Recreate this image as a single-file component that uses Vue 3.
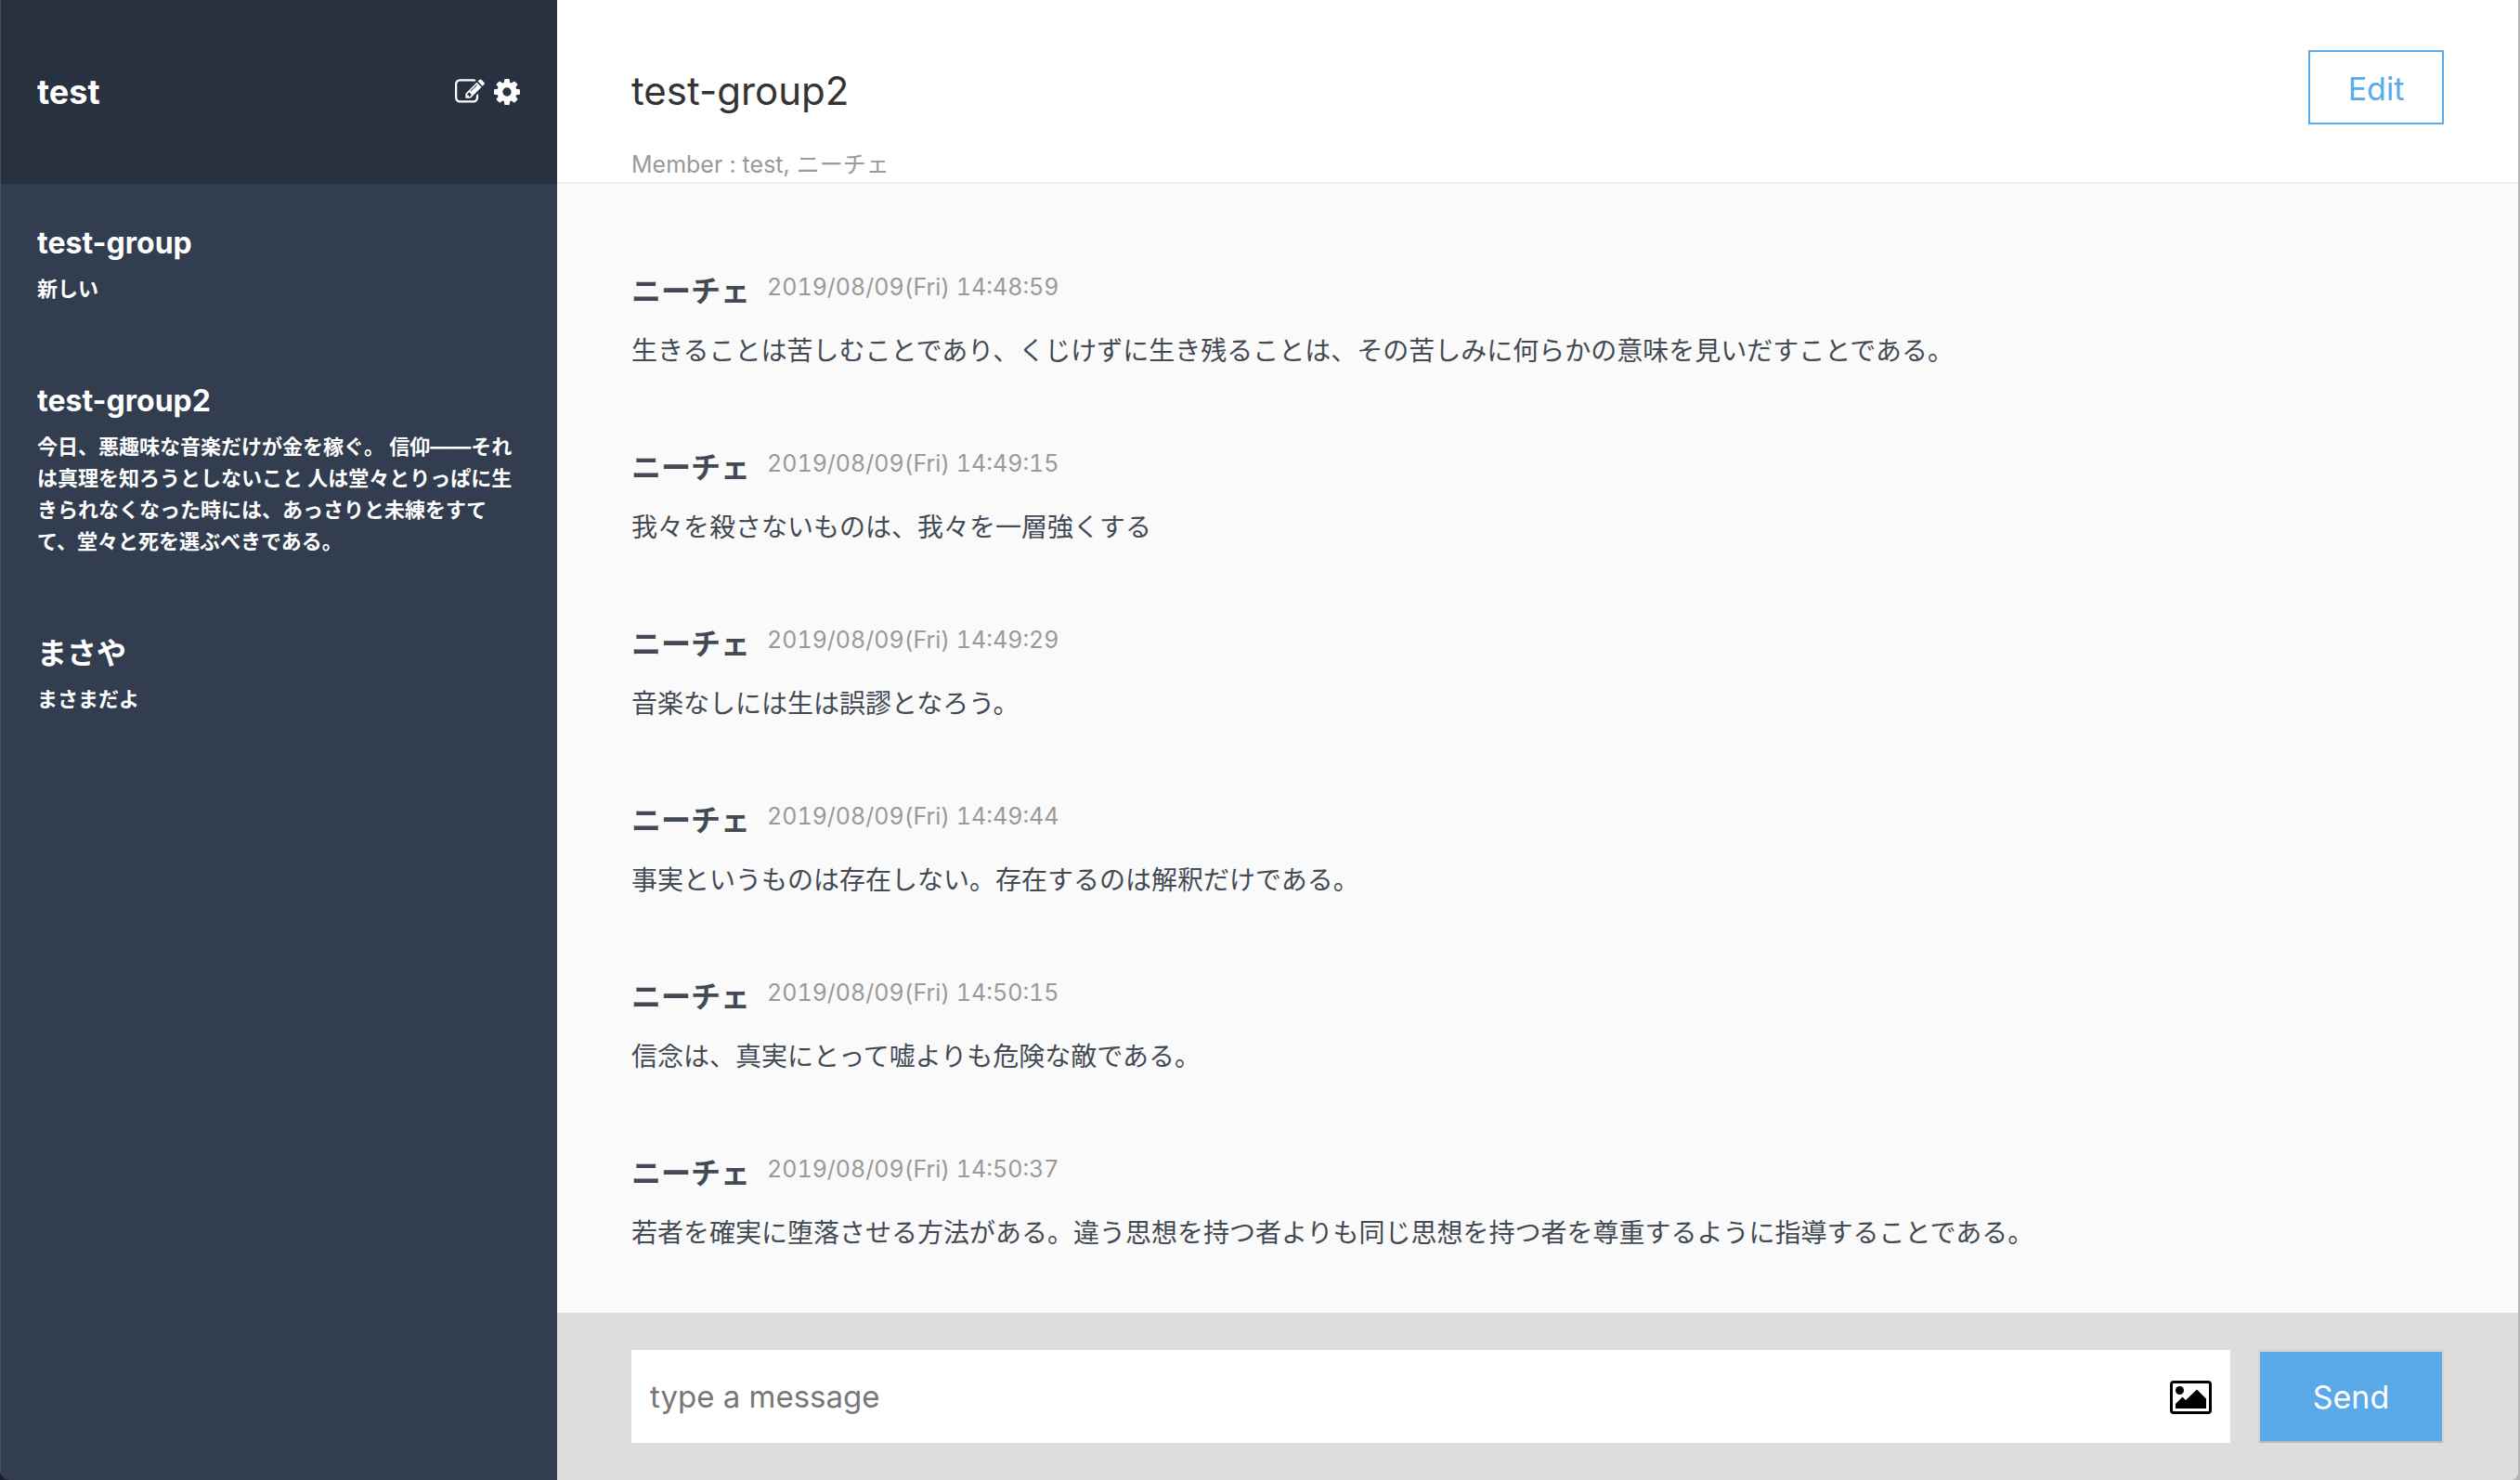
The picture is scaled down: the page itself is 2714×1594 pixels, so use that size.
<script setup>
import { ref } from 'vue'

const draft = ref('')

const groups = [
  { name: 'test-group', preview: '新しい' },
  {
    name: 'test-group2',
    preview:
      '今日、悪趣味な音楽だけが金を稼ぐ。 信仰――それは真理を知ろうとしないこと 人は堂々とりっぱに生きられなくなった時には、あっさりと未練をすてて、堂々と死を選ぶべきである。',
  },
  { name: 'まさや', preview: 'まさまだよ' },
]

const messages = [
  { user: 'ニーチェ', date: '2019/08/09(Fri) 14:48:59', text: '生きることは苦しむことであり、くじけずに生き残ることは、その苦しみに何らかの意味を見いだすことである。' },
  { user: 'ニーチェ', date: '2019/08/09(Fri) 14:49:15', text: '我々を殺さないものは、我々を一層強くする' },
  { user: 'ニーチェ', date: '2019/08/09(Fri) 14:49:29', text: '音楽なしには生は誤謬となろう。' },
  { user: 'ニーチェ', date: '2019/08/09(Fri) 14:49:44', text: '事実というものは存在しない。存在するのは解釈だけである。' },
  { user: 'ニーチェ', date: '2019/08/09(Fri) 14:50:15', text: '信念は、真実にとって嘘よりも危険な敵である。' },
  { user: 'ニーチェ', date: '2019/08/09(Fri) 14:50:37', text: '若者を確実に堕落させる方法がある。違う思想を持つ者よりも同じ思想を持つ者を尊重するように指導することである。' },
]
</script>

<template>
  <div class="chat">
    <aside class="sidebar">
      <header class="account">
        <h2 class="account-name">test</h2>
        <nav class="account-links">
          <a href="#new" aria-label="New group">
            <svg class="icon-edit" viewBox="0 0 1792 1792" fill="currentColor">
              <path d="M888 1184l116-116-152-152-116 116v56h96v96h56zm440-720q-16-16-33 1l-350 350q-17 17-1 33t33-1l350-350q17-17 1-33zm80 594v190q0 119-84.500 203.500t-203.500 84.500h-832q-119 0-203.500-84.500t-84.500-203.500v-832q0-119 84.500-203.500t203.500-84.500h832q63 0 117 25 15 7 18 23 3 17-9 29l-49 49q-14 14-32 8-23-6-45-6h-832q-66 0-113 47t-47 113v832q0 66 47 113t113 47h832q66 0 113-47t47-113v-126q0-13 9-22l64-64q15-15 35-7t20 29zm-96-738l288 288-672 672h-288v-288zm444 132l-92 92-288-288 92-92q28-28 68-28t68 28l152 152q28 28 28 68t-28 68z" />
            </svg>
          </a>
          <a href="#settings" aria-label="Settings">
            <svg class="icon-cog" viewBox="0 0 1536 1536" fill="currentColor">
              <path d="M1024 768q0-106-75-181t-181-75-181 75-75 181 75 181 181 75 181-75 75-181zm512-109v222q0 12-8 23t-20 13l-185 28q-19 54-39 91 35 50 107 138 10 12 10 25t-9 23q-27 37-99 108t-94 71q-12 0-26-9l-138-108q-44 23-91 38-16 136-29 186-7 28-36 28h-222q-14 0-24.500-8.500t-11.500-21.500l-28-184q-49-16-90-37l-141 107q-10 9-25 9-14 0-25-11-126-114-165-168-7-10-7-23 0-12 8-23 15-21 51-66.500t54-70.500q-27-50-41-99l-183-27q-13-2-21-12.500t-8-23.500v-222q0-12 8-23t19-13l186-28q14-46 39-92-40-57-107-138-10-12-10-24 0-10 9-23 26-36 98.500-107.500t94.500-71.500q13 0 26 10l138 107q44-23 91-38 16-136 29-186 7-28 36-28h222q14 0 24.500 8.500t11.500 21.500l28 184q49 16 90 37l142-107q9-9 24-9 13 0 25 10 129 119 165 170 7 8 7 22 0 12-8 23-15 21-51 66.500t-54 70.500q26 50 41 98l183 28q13 2 21 12.500t8 23.500z" />
            </svg>
          </a>
        </nav>
      </header>
      <ul class="groups">
        <li v-for="g in groups" :key="g.name" class="group">
          <h3 class="group-name">{{ g.name }}</h3>
          <p class="group-preview">{{ g.preview }}</p>
        </li>
      </ul>
    </aside>

    <main class="room">
      <header class="room-header">
        <div>
          <h1 class="room-name">test-group2</h1>
          <p class="room-members">Member : test, ニーチェ</p>
        </div>
        <button type="button" class="edit">Edit</button>
      </header>

      <section class="messages">
        <article v-for="m in messages" :key="m.date" class="message">
          <div class="message-head">
            <strong class="message-user">{{ m.user }}</strong>
            <time class="message-date">{{ m.date }}</time>
          </div>
          <p class="message-text">{{ m.text }}</p>
        </article>
      </section>

      <form class="composer" @submit.prevent>
        <div class="field">
          <input v-model="draft" class="field-text" type="text" placeholder="type a message" aria-label="Message" />
          <button type="button" class="attach" aria-label="Attach image">
            <svg class="icon-image" viewBox="0 0 45 36">
              <rect x="1.500" y="1.500" width="42" height="33" rx="2.500" fill="none" stroke="currentColor" stroke-width="3" />
              <circle cx="10.500" cy="10.500" r="4.500" fill="currentColor" />
              <path d="M6 30v-5l7.500-7.500 3.500 3.500 12-11.500 10 10V30z" fill="currentColor" />
            </svg>
          </button>
        </div>
        <button type="submit" class="send">Send</button>
      </form>
    </main>
  </div>
</template>

<style>
body {
  margin: 0;
  background: linear-gradient(to right, #18202c 50%, #b4b4b4 50%);
}
</style>

<style scoped>
.chat {
  display: flex;
  box-sizing: border-box;
  min-height: 100vh;
  overflow: hidden;
  border-right: 2px solid #b4b4b4;
  border-radius: 0 0 10px 10px;
  font-family: Inter, "Noto Sans CJK JP", sans-serif;
  color: #434a54;
}

h1, h2, h3, p, ul {
  margin: 0;
  padding: 0;
}

.sidebar {
  flex: 0 0 600px;
  box-sizing: border-box;
  border-left: 1px solid #434e60;
  background: #323d4f;
  color: #fff;
}

.account {
  display: flex;
  align-items: center;
  justify-content: space-between;
  box-sizing: border-box;
  height: 198px;
  padding: 0 40px 0 39px;
  background: #283140;
}

.account-name {
  font-size: 36px;
  line-height: 48px;
}

.account-links {
  display: flex;
  align-items: center;
  gap: 10px;
}

.account-links a {
  display: flex;
  color: #fff;
}

.icon-edit {
  width: 32px;
  height: 32px;
}

.icon-cog {
  width: 28px;
  height: 28px;
}

.groups {
  list-style: none;
}

.group {
  padding: 40px 40px 40px 39px;
}

.group-name {
  font-size: 32px;
  line-height: 48px;
}

.group-preview {
  margin-top: 8px;
  font-size: 22px;
  font-weight: 700;
  line-height: 34px;
}

.room {
  display: flex;
  flex: 1;
  flex-direction: column;
  min-width: 0;
  background: #fafafa;
}

.room-header {
  display: flex;
  align-items: flex-start;
  justify-content: space-between;
  box-sizing: border-box;
  height: 198px;
  padding: 54px 80px 0;
  border-bottom: 2px solid #eee;
  background: #fff;
}

.room-name {
  margin-top: 14px;
  font-size: 42px;
  font-weight: 400;
  line-height: 60px;
  color: #333;
}

.room-members {
  margin-top: 30px;
  font-size: 25px;
  line-height: 38px;
  color: #999;
}

.edit {
  width: 146px;
  height: 80px;
  padding: 2px 0 0;
  border: 2px solid #5aaaea;
  background: #fff;
  font: inherit;
  font-size: 34px;
  color: #5aaaea;
}

.messages {
  flex: 1;
  padding: 92px 80px 0;
}

.message {
  margin-bottom: 82px;
}

.message:last-child {
  margin-bottom: 0;
}

.message-head {
  display: flex;
  gap: 18px;
}

.message-user {
  font-size: 32px;
  line-height: 48px;
}

.message-date {
  font-size: 25px;
  font-variant-numeric: tabular-nums;
  line-height: 38px;
  color: #999;
}

.message-text {
  margin-top: 20px;
  font-size: 28px;
  line-height: 40px;
}

.composer {
  display: flex;
  gap: 30px;
  padding: 40px 80px;
  background: #ddd;
}

.field {
  display: flex;
  flex: 1;
  align-items: center;
  height: 100px;
  background: #fff;
}

.field-text {
  flex: 1;
  min-width: 0;
  height: 100%;
  padding: 0 20px;
  border: 0;
  background: none;
  font: inherit;
  font-size: 33px;
  color: #333;
}

.field-text::placeholder {
  color: #777;
}

.attach {
  display: flex;
  padding: 2px 20px 0 0;
  border: 0;
  background: none;
  color: #000;
}

.icon-image {
  width: 45px;
  height: 36px;
}

.send {
  width: 200px;
  height: 100px;
  padding: 0;
  border: 2px solid #d4d4d4;
  border-bottom-color: #b8b8b8;
  background: #5aaaea;
  font: inherit;
  font-size: 34px;
  color: #fff;
}
</style>
